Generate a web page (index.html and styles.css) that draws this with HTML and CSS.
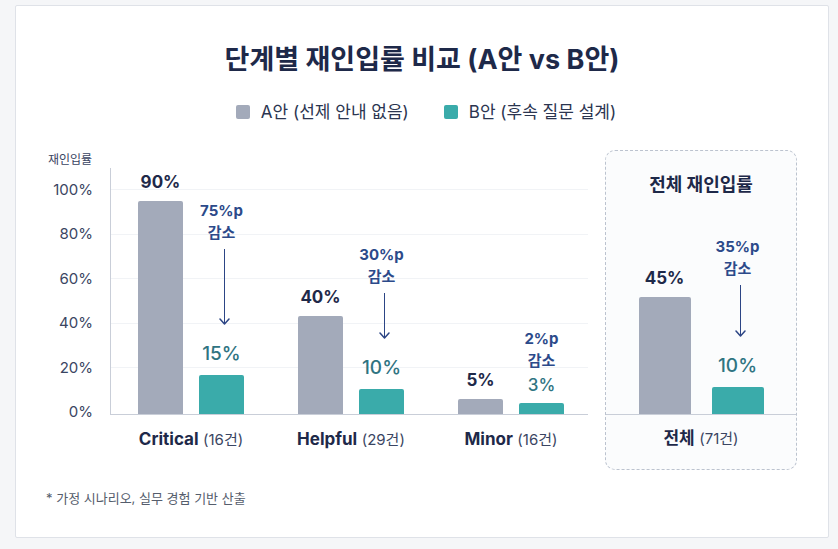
FILE: index.html
```html
<!DOCTYPE html>
<html lang="ko">
<head>
<meta charset="utf-8">
<title>단계별 재인입률 비교</title>
<link rel="stylesheet" href="styles.css">
</head>
<body>
<div class="card">
  <h1 class="title">단계별 재인입률 비교 (A안 vs B안)</h1>
  <div class="legend">
    <div class="legend-item"><span class="swatch swatch-a"></span>A안 (선제 안내 없음)</div>
    <div class="legend-item"><span class="swatch swatch-b"></span>B안 (후속 질문 설계)</div>
  </div>
  <div class="main">
    <div class="chart">
      <div class="y-title">재인입률</div>
      <div class="chart-body">
        <div class="ticks">
          <span>100%</span><span>80%</span><span>60%</span><span>40%</span><span>20%</span><span>0%</span>
        </div>
        <div class="plot">
          <div class="group">
            <div class="col">
              <div class="val val-a">90%</div>
              <div class="bar bar-a" style="height:213px"></div>
            </div>
            <div class="col">
              <div class="delta">75%p<br>감소</div>
              <div class="arrow" style="height:76px"><span class="arrow-line"></span><svg class="arrow-head" width="11" height="7" viewBox="0 0 11 7"><path d="M1 1 L5.5 6 L10 1" fill="none" stroke="#2c4585" stroke-width="1.5" stroke-linecap="round" stroke-linejoin="round"/></svg></div>
              <div class="val val-b">15%</div>
              <div class="bar bar-b" style="height:39px"></div>
            </div>
          </div>
          <div class="group">
            <div class="col">
              <div class="val val-a">40%</div>
              <div class="bar bar-a" style="height:98px"></div>
            </div>
            <div class="col">
              <div class="delta">30%p<br>감소</div>
              <div class="arrow" style="height:46px"><span class="arrow-line"></span><svg class="arrow-head" width="11" height="7" viewBox="0 0 11 7"><path d="M1 1 L5.5 6 L10 1" fill="none" stroke="#2c4585" stroke-width="1.5" stroke-linecap="round" stroke-linejoin="round"/></svg></div>
              <div class="val val-b">10%</div>
              <div class="bar bar-b" style="height:25px"></div>
            </div>
          </div>
          <div class="group">
            <div class="col">
              <div class="val val-a">5%</div>
              <div class="bar bar-a" style="height:15px"></div>
            </div>
            <div class="col">
              <div class="delta delta-near">2%p<br>감소</div>
              <div class="val val-b val-small">3%</div>
              <div class="bar bar-b" style="height:11px"></div>
            </div>
          </div>
        </div>
      </div>
      <div class="cats">
        <div class="cat"><b>Critical</b>&nbsp;<span>(16건)</span></div>
        <div class="cat"><b>Helpful</b>&nbsp;<span>(29건)</span></div>
        <div class="cat"><b>Minor</b>&nbsp;<span>(16건)</span></div>
      </div>
    </div>
    <div class="panel">
      <div class="panel-title">전체 재인입률</div>
      <div class="panel-plot">
        <div class="col col-wide">
          <div class="val val-a">45%</div>
          <div class="bar bar-a" style="height:117px"></div>
        </div>
        <div class="col col-wide">
          <div class="delta">35%p<br>감소</div>
          <div class="arrow" style="height:52px"><span class="arrow-line"></span><svg class="arrow-head" width="11" height="7" viewBox="0 0 11 7"><path d="M1 1 L5.5 6 L10 1" fill="none" stroke="#2c4585" stroke-width="1.5" stroke-linecap="round" stroke-linejoin="round"/></svg></div>
          <div class="val val-b">10%</div>
          <div class="bar bar-b" style="height:27px"></div>
        </div>
      </div>
      <div class="panel-label"><b>전체</b>&nbsp;<span>(71건)</span></div>
    </div>
  </div>
  <p class="note">* 가정 시나리오, 실무 경험 기반 산출</p>
</div>
</body>
</html>
```
FILE: styles.css
```css
* { box-sizing: border-box; }

html, body {
  margin: 0;
  padding: 0;
  background: #f5f6f8;
}

body {
  font-family: "Inter", "Noto Sans CJK KR", "Noto Sans", sans-serif;
  color: #1e2949;
  width: 838px;
  height: 549px;
  overflow: hidden;
}

.card {
  margin: 5px 0 0 15px;
  width: 814px;
  height: 533px;
  background: #ffffff;
  border: 1px solid #dfe2e8;
  border-radius: 2px;
  padding-top: 37px;
}

.title {
  margin: 0;
  font-size: 27px;
  line-height: 34px;
  font-weight: 700;
  text-align: center;
  color: #1e2949;
}

.legend {
  margin-top: 25px;
  display: flex;
  justify-content: center;
  gap: 35px;
  padding-left: 8px;
  font-size: 17px;
  line-height: 20px;
  color: #2b3550;
}

.legend-item {
  display: flex;
  align-items: center;
  gap: 11px;
}

.swatch {
  width: 14px;
  height: 14px;
  border-radius: 2px;
  display: block;
}

.swatch-a { background: #a3aaba; }
.swatch-b { background: #3aabaa; }

.main {
  margin-top: 28px;
  padding-left: 24px;
  display: flex;
  align-items: flex-start;
  gap: 17px;
}

.chart {
  width: 548px;
}

.y-title {
  margin: 2px 0 0 8px;
  font-size: 12px;
  line-height: 16px;
  color: #3a4562;
}

.chart-body {
  display: flex;
  height: 247px;
}

.ticks {
  width: 53px;
  margin-right: 17px;
  padding-top: 13px;
  display: flex;
  flex-direction: column;
  align-items: flex-end;
  gap: 26.4px;
  font-size: 15px;
  line-height: 18px;
  color: #3a4562;
}

.ticks span { display: block; height: 18px; }

.plot {
  flex: 1;
  border-left: 1px solid #c9ced8;
  border-bottom: 1px solid #c9ced8;
  padding-left: 27px;
  display: flex;
  align-items: flex-end;
  gap: 54px;
  background: repeating-linear-gradient(to bottom,
    transparent 0, transparent 21.5px,
    #f1f3f6 21.5px, #f1f3f6 22.5px,
    transparent 22.5px, transparent 44.4px);
}

.group {
  width: 106px;
  display: flex;
  align-items: flex-end;
  gap: 16px;
}

.col {
  width: 45px;
  display: flex;
  flex-direction: column;
  align-items: center;
  justify-content: flex-end;
}

.col-wide { width: 52px; }

.bar {
  width: 100%;
  border-radius: 2px 2px 0 0;
}

.bar-a { background: #a3aaba; }
.bar-b { background: #3aabaa; }

.val {
  white-space: nowrap;
}

.val-a {
  font-size: 17px;
  line-height: 20px;
  font-weight: 700;
  color: #1e2949;
  margin-bottom: 9px;
}

.val-b {
  font-size: 19px;
  line-height: 22px;
  font-weight: 500;
  color: #2f7482;
  margin-bottom: 10px;
}

.val-small {
  font-size: 17px;
  margin-bottom: 7px;
}

.delta {
  white-space: nowrap;
  text-align: center;
  font-size: 15px;
  line-height: 22px;
  font-weight: 700;
  color: #2c4a8a;
  margin-bottom: 5px;
}

.delta-near { margin-bottom: 2px; }

.arrow {
  display: flex;
  flex-direction: column;
  align-items: center;
  margin-bottom: 18px;
  margin-left: 6px;
}

.arrow-line {
  flex: 1;
  width: 1.5px;
  background: #2c4585;
  margin-bottom: -6px;
}

.arrow-head { display: block; }

.cats {
  margin-left: 98px;
  display: flex;
  gap: 54px;
  margin-top: 14px;
}

.cat {
  width: 106px;
  display: flex;
  justify-content: center;
  align-items: baseline;
  white-space: nowrap;
  line-height: 20px;
}

.cat b, .panel-label b {
  font-size: 17px;
  font-weight: 700;
  color: #1e2949;
}

.cat span, .panel-label span {
  font-size: 15px;
  color: #3a4562;
}

.panel {
  width: 192px;
  height: 320px;
  border: 1px dashed #bcc3cf;
  border-radius: 10px;
  background: #fbfcfd;
  display: flex;
  flex-direction: column;
}

.panel-title {
  padding-top: 23px;
  font-size: 18px;
  line-height: 22px;
  font-weight: 700;
  text-align: center;
  color: #1e2949;
}

.panel-plot {
  flex: 1;
  display: flex;
  justify-content: center;
  align-items: flex-end;
  gap: 21px;
  border-bottom: 1px solid #c9ced8;
}

.panel-label {
  height: 54px;
  padding-top: 13px;
  display: flex;
  justify-content: center;
  align-items: baseline;
  line-height: 20px;
  white-space: nowrap;
}

.note {
  margin: 20px 0 0 30px;
  font-size: 13px;
  line-height: 16px;
  color: #555d6c;
}
```
